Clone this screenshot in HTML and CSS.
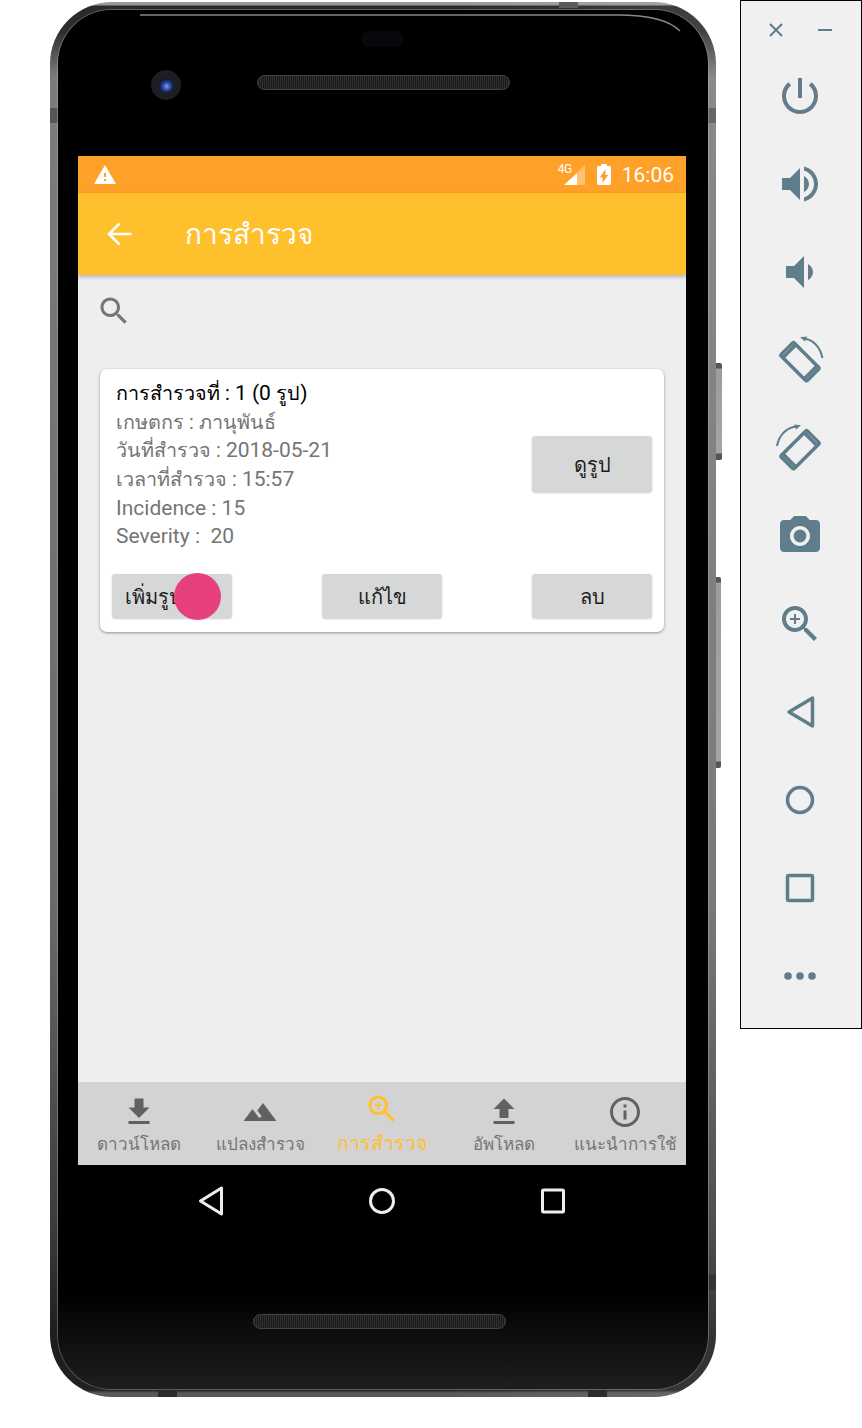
FILE: index.html
```html
<!DOCTYPE html>
<html lang="th">

<head>
    <meta charset="UTF-8">
    <title>การสำรวจ</title>
    <link rel="stylesheet" href="styles.css">
</head>

<body>

    <div class="phone">
        <div class="side-btn power"></div>
        <div class="side-btn volume"></div>
        <div class="notch n-left"></div>
        <div class="notch n-right"></div>
        <div class="notch n-right2"></div>
        <div class="notch n-top"></div>
        <div class="notch n-bot1"></div>
        <div class="notch n-bot2"></div>

        <div class="bezel">
            <svg class="shine" viewBox="0 0 650 30"><path d="M82 5H560C590 5 612 11 622 21"/></svg>
            <div class="sensor"></div>
            <div class="camera"><div class="lens"></div></div>
            <div class="speaker top"></div>

            <div class="screen">
                <div class="statusbar">
                    <svg class="warn" viewBox="1 2 22 19"><path d="M1 21h22L12 2 1 21zm12-3h-2v-2h2v2zm0-4h-2v-4h2v4z"/></svg>
                    <span class="spacer"></span>
                    <span class="net">4G</span>
                    <svg class="signal" viewBox="0 0 21 20"><path d="M21 0v20H13V8z" fill="#fff" fill-opacity=".35"/><path d="M13 8v12H0z"/></svg>
                    <svg class="battery" viewBox="7 2 10 20" preserveAspectRatio="none"><path d="M15.67 4H14V2h-4v2H8.33C7.6 4 7 4.6 7 5.33v15.33C7 21.4 7.6 22 8.33 22h7.33c.74 0 1.34-.6 1.34-1.33V5.33C17 4.6 16.4 4 15.67 4zM11 20v-5.5H9L13 7v5.5h2L11 20z"/></svg>
                    <span class="clock">16:06</span>
                </div>

                <div class="appbar">
                    <svg class="back" viewBox="0 0 25 24"><path d="M24.5 12H2M12.5 1.5 2 12l10.5 10.5"/></svg>
                    <span class="appbar-title">การสำรวจ</span>
                </div>

                <div class="content">
                    <svg class="search" viewBox="0 0 24 24"><path d="M15.5 14h-.79l-.28-.27C15.41 12.59 16 11.11 16 9.5 16 5.91 13.09 3 9.5 3S3 5.91 3 9.5c0 3.59 2.91 6.5 6.5 6.5 1.61 0 3.09-.59 4.23-1.57l.27.28v.79l5 4.99L20.49 19l-4.99-5zm-6 0C7.01 14 5 11.99 5 9.5S7.01 5 9.5 5 14 7.01 14 9.5 11.99 14 9.5 14z"/></svg>

                    <div class="card">
                        <div class="card-top">
                            <div class="info">
                                <div class="info-title"><span class="th">การสำรวจที่ :</span> 1 (0 <span class="th">รูป</span>)</div>
                                <div><span class="th">เกษตกร : ภานุพันธ์</span></div>
                                <div><span class="th">วันที่สำรวจ :</span> 2018-05-21</div>
                                <div><span class="th">เวลาที่สำรวจ :</span> 15:57</div>
                                <div>Incidence : 15</div>
                                <div>Severity :&nbsp; 20</div>
                            </div>
                            <button class="btn tall">ดูรูป</button>
                        </div>
                        <div class="card-actions">
                            <button class="btn">เพิ่มรูปภาพ<span class="touch"></span></button>
                            <button class="btn">แก้ไข</button>
                            <button class="btn">ลบ</button>
                        </div>
                    </div>
                </div>

                <div class="tabs">
                    <div class="tab">
                        <svg viewBox="0 0 24 24"><path d="M19 9h-4V3H9v6H5l7 7 7-7zM5 18v2h14v-2H5z"/></svg>
                        <span>ดาวน์โหลด</span>
                    </div>
                    <div class="tab">
                        <svg viewBox="0 0 24 24"><path d="M14 6l-3.75 5 2.85 3.8-1.6 1.2C9.81 13.75 7 10 7 10l-6 8h22L14 6z"/></svg>
                        <span>แปลงสำรวจ</span>
                    </div>
                    <div class="tab active">
                        <svg class="lift" viewBox="0 0 24 24"><path d="M15.5 14h-.79l-.28-.27C15.41 12.59 16 11.11 16 9.5 16 5.91 13.09 3 9.5 3S3 5.91 3 9.5 5.91 16 9.5 16c1.61 0 3.09-.59 4.23-1.57l.27.28v.79l5 4.99L20.49 19l-4.99-5zm-6 0C7.01 14 5 11.99 5 9.5S7.01 5 9.5 5 14 7.01 14 9.5 11.99 14 9.5 14zM12 10h-2v2H9v-2H7V9h2V7h1v2h2v1z"/></svg>
                        <span>การสำรวจ</span>
                    </div>
                    <div class="tab">
                        <svg viewBox="0 0 24 24"><path d="M9 16h6v-6h4l-7-7-7 7h4v6zm-4 2h14v2H5v-2z"/></svg>
                        <span>อัพโหลด</span>
                    </div>
                    <div class="tab">
                        <svg viewBox="0 0 24 24"><path d="M11 17h2v-6h-2v6zm1-15C6.48 2 2 6.48 2 12s4.48 10 10 10 10-4.48 10-10S17.52 2 12 2zm0 18c-4.41 0-8-3.59-8-8s3.59-8 8-8 8 3.59 8 8-3.59 8-8 8zm-1-11h2V7h-2v2z"/></svg>
                        <span>แนะนำการใช้</span>
                    </div>
                </div>
            </div>

            <div class="navbar">
                <svg viewBox="0 0 26 30"><path d="M23.5 2v26L2.500 15z"/></svg>
                <svg viewBox="0 0 26 30"><circle cx="13" cy="15" r="11.5"/></svg>
                <svg viewBox="0 0 26 30"><rect x="2.500" y="4" width="21" height="22" rx="1"/></svg>
            </div>

            <div class="speaker bottom"></div>
        </div>
    </div>

    <div class="tools">
        <div class="tools-head">
            <svg class="small" viewBox="0 0 14 14"><path d="M1 1l12 12M13 1L1 13"/></svg>
            <svg class="small" viewBox="0 0 14 14"><path d="M0 7h14"/></svg>
        </div>
        <svg class="tool" viewBox="0 0 24 24"><path d="M13 3h-2v10h2V3zm4.83 2.17l-1.42 1.42C17.99 7.86 19 9.81 19 12c0 3.87-3.13 7-7 7s-7-3.13-7-7c0-2.19 1.01-4.14 2.58-5.42L6.17 5.17C4.23 6.82 3 9.26 3 12c0 4.97 4.03 9 9 9s9-4.03 9-9c0-2.74-1.23-5.18-3.17-6.83z"/></svg>
        <svg class="tool" viewBox="0 0 24 24"><path d="M3 9v6h4l5 5V4L7 9H3zm13.5 3c0-1.77-1.02-3.29-2.5-4.03v8.05c1.48-.73 2.5-2.25 2.5-4.02zM14 3.23v2.06c2.89.86 5 3.54 5 6.71s-2.11 5.85-5 6.71v2.06c4.01-.91 7-4.49 7-8.77s-2.99-7.86-7-8.77z"/></svg>
        <svg class="tool" viewBox="0 0 24 24"><path d="M18.5 12c0-1.77-1.02-3.29-2.5-4.03v8.05c1.48-.73 2.500-2.25 2.5-4.02zM5 9v6h4l5 5V4L9 9H5z"/></svg>
        <svg class="tool" viewBox="0 0 48 48">
            <g transform="rotate(45 24 25.7)">
                <rect class="line" x="5.500" y="16.500" width="37" height="18.500" rx="1.500"/>
                <path class="line" d="M9 17v18M39 17v18"/>
            </g>
            <path class="line thin" d="M27 2.500C37 3 44 11 46.500 22"/>
            <path d="M24 1.300l7-.8-2 5z"/>
        </svg>
        <svg class="tool" viewBox="0 0 48 48">
            <g transform="rotate(-45 24 25.7)">
                <rect class="line" x="5.500" y="16.500" width="37" height="18.500" rx="1.500"/>
                <path class="line" d="M9 17v18M39 17v18"/>
            </g>
            <path class="line thin" d="M21 2.500C11 3 3 11 1 22"/>
            <path d="M25 1.300l-7-.8 2 5z"/>
        </svg>
        <svg class="tool" viewBox="0 0 24 24"><path fill-rule="evenodd" d="M9 2L7.17 4H4c-1.1 0-2 .9-2 2v12c0 1.1.9 2 2 2h16c1.1 0 2-.9 2-2V6c0-1.1-.9-2-2-2h-3.17L15 2H9zm3 15c-2.76 0-5-2.24-5-5s2.24-5 5-5 5 2.24 5 5-2.24 5-5 5z"/><circle cx="12" cy="12" r="3.2"/></svg>
        <svg class="tool" viewBox="0 0 24 24"><path d="M15.5 14h-.79l-.28-.27C15.41 12.59 16 11.11 16 9.5 16 5.91 13.09 3 9.5 3S3 5.910 3 9.5 5.91 16 9.5 16c1.61 0 3.09-.59 4.23-1.57l.27.28v.79l5 4.99L20.49 19l-4.99-5zm-6 0C7.01 14 5 11.99 5 9.5S7.01 5 9.5 5 14 7.01 14 9.5 11.99 14 9.5 14zM12 10h-2v2H9v-2H7V9h2V7h1v2h2v1z"/></svg>
        <svg class="tool" viewBox="0 0 48 48"><path class="line" d="M36.5 10v28L13 24z"/></svg>
        <svg class="tool" viewBox="0 0 48 48"><circle class="line" cx="24" cy="24" r="12.5"/></svg>
        <svg class="tool" viewBox="0 0 48 48"><rect class="line" x="11.5" y="11.5" width="25" height="25" rx="1.5"/></svg>
        <svg class="tool" viewBox="0 0 48 48"><circle cx="12" cy="24" r="3.8"/><circle cx="24" cy="24" r="3.8"/><circle cx="36" cy="24" r="3.8"/></svg>
    </div>

</body>

</html>
```

FILE: styles.css
```css
* {
    box-sizing: border-box;
}

body {
    margin: 0;
    width: 862px;
    height: 1428px;
    overflow: hidden;
    background: #fff;
    display: flex;
    align-items: flex-start;
    font-family: Roboto, "Noto Sans", sans-serif;
}

svg {
    display: block;
    fill: currentColor;
}

/* phone frame */

.phone {
    position: relative;
    flex: none;
    width: 666px;
    height: 1395px;
    margin: 2px 24px 0 50px;
    padding: 8px;
    border-radius: 62px;
    background:
        linear-gradient(90deg, transparent 60%, rgba(255, 255, 255, .1)),
        linear-gradient(#9a9a9a 0 3px, #2a2a2a 4px, #2e2e2e 30px, #7c7c7c 75px, #6a6a6a 900px, #3a3a3a 1230px, #1c1c1c 1340px, #222 1388px, #5a5a5a 1391px);
}

.side-btn {
    position: absolute;
    left: 100%;
    width: 6px;
    border-radius: 0 2px 2px 0;
    background: linear-gradient(#555 0 5px, #9d9d9d 6px, #a5a5a5 calc(100% - 7px), #555 calc(100% - 6px));
}

.power {
    top: 361px;
    height: 97px;
}

.volume {
    top: 575px;
    width: 5px;
    height: 191px;
}

.notch {
    position: absolute;
    background: #555;
}

.n-left {
    left: 0;
    top: 106px;
    width: 8px;
    height: 15px;
}

.n-right {
    right: 0;
    top: 106px;
    width: 8px;
    height: 15px;
    background: #666;
}

.n-right2 {
    right: 0;
    top: 1273px;
    width: 8px;
    height: 15px;
    background: #333;
}

.n-top {
    left: 509px;
    top: 0;
    width: 19px;
    height: 6px;
    background: #5c5c5c;
}

.n-bot1 {
    left: 108px;
    bottom: 0;
    width: 19px;
    height: 7px;
    background: #2c2c2c;
}

.n-bot2 {
    right: 109px;
    bottom: 0;
    width: 19px;
    height: 7px;
    background: #2c2c2c;
}

.bezel {
    position: relative;
    height: 100%;
    padding: 146px 22px 0 20px;
    border-radius: 54px;
    background: linear-gradient(#000 93%, #1e1e1e);
    box-shadow: 0 0 0 1px rgba(190, 200, 200, .35);
}

.shine {
    position: absolute;
    top: 0;
    left: 0;
    width: 650px;
    height: 30px;
    fill: none;
    stroke: #808a8c;
    stroke-width: 1.5;
}

.sensor {
    position: absolute;
    top: 21px;
    left: 303px;
    width: 43px;
    height: 16px;
    border-radius: 8px;
    background: #07080b;
}

.camera {
    position: absolute;
    top: 60px;
    left: 93px;
    width: 30px;
    height: 30px;
    padding: 8px;
    border-radius: 50%;
    background: #1c1e21;
}

.lens {
    width: 14px;
    height: 14px;
    border-radius: 50%;
    background: radial-gradient(circle at 55% 60%, #7f9fe8, #2a45a0 35%, #0b1230 70%, #05070f);
}

.speaker {
    position: absolute;
    width: 253px;
    height: 15px;
    border: 1px solid #444;
    border-radius: 8px;
    background: repeating-linear-gradient(90deg, #303030 0 1px, #1a1a1a 1px 2px);
}

.speaker.top {
    top: 65px;
    left: 199px;
}

.speaker.bottom {
    top: 1304px;
    left: 195px;
}

/* android screen */

.screen {
    width: 608px;
    height: 1009px;
    display: flex;
    flex-direction: column;
    background: #eee;
}

.statusbar {
    flex: none;
    height: 37px;
    display: flex;
    align-items: center;
    padding: 0 12px 0 16px;
    background: #ffa028;
    color: #fff;
}

.warn {
    width: 22px;
    height: 19px;
}

.spacer {
    flex: 1;
}

.net {
    position: relative;
    margin: -12px -8px 0 0;
    font-size: 12px;
    letter-spacing: -.5px;
}

.signal {
    width: 21px;
    height: 20px;
}

.battery {
    width: 14px;
    height: 21px;
    margin: 0 11px 0 12px;
}

.clock {
    font-size: 21px;
}

.appbar {
    position: relative;
    flex: none;
    height: 82px;
    display: flex;
    align-items: center;
    padding-left: 29px;
    background: #ffc02e;
    color: #fff;
    box-shadow: 0 2px 4px rgba(0, 0, 0, .25);
}

.back {
    width: 25px;
    height: 24px;
    fill: none;
    stroke: #fff;
    stroke-width: 2.5;
}

.appbar-title {
    margin-left: 53px;
    font-size: 28px;
}

.content {
    flex: 1;
    padding: 18px 22px 0;
}

.search {
    width: 36px;
    height: 36px;
    margin-left: -4px;
    color: #757575;
}

.card {
    margin-top: 40px;
    height: 263px;
    padding: 10px 12px 14px;
    display: flex;
    flex-direction: column;
    justify-content: space-between;
    border-radius: 7px;
    background: #fff;
    box-shadow: 0 1px 3px rgba(0, 0, 0, .4);
}

.card-top {
    display: flex;
    align-items: center;
    justify-content: space-between;
}

.info {
    padding-left: 4px;
    font-size: 21px;
    line-height: 28.7px;
    color: #757575;
}

.info > div {
    height: 28.7px;
}

.th {
    font-size: 19.8px;
    line-height: 1;
}

.info-title {
    color: #000;
}

.btn {
    position: relative;
    width: 120px;
    height: 44px;
    border: 0;
    padding: 2px 0 0;
    border-radius: 3px;
    background: #d6d7d7;
    box-shadow: 0 1px 2px rgba(0, 0, 0, .2);
    font: 20px Roboto, "Noto Sans", sans-serif;
    color: #1c1c1c;
}

.btn.tall {
    height: 56px;
    margin-top: -2px;
}

.card-actions {
    display: flex;
    justify-content: space-between;
}

.touch {
    position: absolute;
    top: -1px;
    left: 62px;
    width: 47px;
    height: 47px;
    border-radius: 50%;
    background: #e6407f;
}

.tabs {
    flex: none;
    height: 83px;
    display: grid;
    grid-template-columns: repeat(5, 1fr);
    background: #d3d3d3;
}

.tab {
    display: flex;
    flex-direction: column;
    align-items: center;
    padding-top: 12px;
    font-size: 17px;
    line-height: 28px;
    color: #757575;
    white-space: nowrap;
}

.tab svg {
    width: 36px;
    height: 36px;
    color: #616161;
}

.tab .lift {
    margin-top: -3px;
    margin-bottom: 3px;
}

.tab.active {
    font-size: 19.6px;
}

.tab.active,
.tab.active svg {
    color: #ffc02e;
}

.navbar {
    display: flex;
    justify-content: center;
    gap: 145px;
    padding-top: 21px;
}

.navbar svg {
    width: 26px;
    height: 30px;
    fill: none;
    stroke: #eee;
    stroke-width: 3;
    stroke-linejoin: round;
}

/* emulator toolbar */

.tools {
    flex: none;
    width: 122px;
    height: 1029px;
    border: 1px solid #000;
    background: #f0f0f0;
    color: #607d8b;
    display: flex;
    flex-direction: column;
    align-items: center;
    gap: 40px;
    padding: 22px 2px 0 0;
}

.tools-head {
    align-self: stretch;
    display: flex;
    justify-content: space-between;
    height: 14px;
    margin-bottom: -5px;
    padding: 0 27px 0 28px;
}

.small {
    width: 14px;
    height: 14px;
    fill: none;
    stroke: currentColor;
    stroke-width: 2;
}

.tool {
    flex: none;
    width: 48px;
    height: 48px;
}

.line {
    fill: none;
    stroke: currentColor;
    stroke-width: 3.5;
    stroke-linejoin: round;
}

.thin {
    stroke-width: 2;
}
```
